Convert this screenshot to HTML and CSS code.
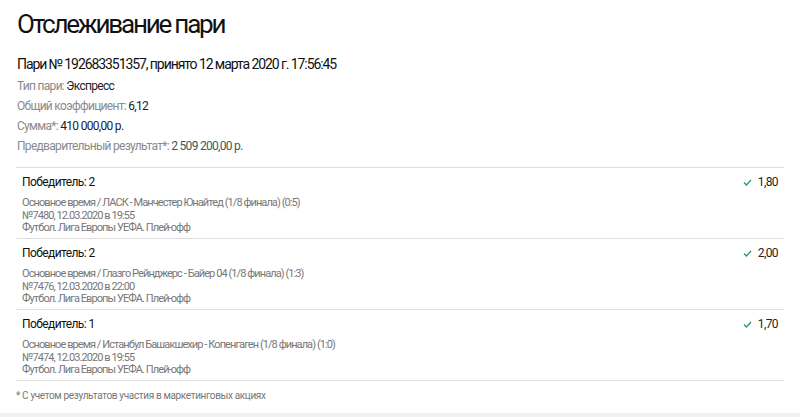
FILE: index.html
```html
<!DOCTYPE html>
<html lang="ru">
<head>
  <meta charset="UTF-8" />
  <meta name="viewport" content="width=device-width, initial-scale=1.0" />
  <title>Отслеживание пари</title>
  <link rel="stylesheet" href="styles.css">
</head>
<body>
  <div class="page">
    <h1 class="title">Отслеживание пари</h1>
    <div class="bet-head">Пари № 192683351357, принято 12 марта 2020 г. 17:56:45</div>
    <div class="info">
      <div class="info-row"><span class="label">Тип пари:</span> Экспресс</div>
      <div class="info-row"><span class="label">Общий коэффициент:</span> 6,12</div>
      <div class="info-row"><span class="label">Сумма*:</span> 410 000,00 р.</div>
      <div class="info-row"><span class="label">Предварительный результат*:</span> <span class="result">2 509 200,00 р.</span></div>
    </div>

    <div class="events">
      <div class="event">
        <div class="event-main">
          <div class="event-outcome">Победитель: 2</div>
          <div class="event-desc">
            <div>Основное время / ЛАСК - Манчестер Юнайтед (1/8 финала) (0:5)</div>
            <div>№7480, 12.03.2020 в 19:55</div>
            <div>Футбол. Лига Европы УЕФА. Плей-офф</div>
          </div>
        </div>
        <div class="event-odds">
          <svg class="check" width="9" height="7" viewBox="0 0 9 7"><path d="M1 3.6 L3.4 6 L8 1" fill="none" stroke="#2a9d6a" stroke-width="1.4"/></svg>
          1,80
        </div>
      </div>
      <div class="event">
        <div class="event-main">
          <div class="event-outcome">Победитель: 2</div>
          <div class="event-desc">
            <div>Основное время / Глазго Рейнджерс - Байер 04 (1/8 финала) (1:3)</div>
            <div>№7476, 12.03.2020 в 22:00</div>
            <div>Футбол. Лига Европы УЕФА. Плей-офф</div>
          </div>
        </div>
        <div class="event-odds">
          <svg class="check" width="9" height="7" viewBox="0 0 9 7"><path d="M1 3.6 L3.4 6 L8 1" fill="none" stroke="#2a9d6a" stroke-width="1.4"/></svg>
          2,00
        </div>
      </div>
      <div class="event">
        <div class="event-main">
          <div class="event-outcome">Победитель: 1</div>
          <div class="event-desc">
            <div>Основное время / Истанбул Башакшехир - Копенгаген (1/8 финала) (1:0)</div>
            <div>№7474, 12.03.2020 в 19:55</div>
            <div>Футбол. Лига Европы УЕФА. Плей-офф</div>
          </div>
        </div>
        <div class="event-odds">
          <svg class="check" width="9" height="7" viewBox="0 0 9 7"><path d="M1 3.6 L3.4 6 L8 1" fill="none" stroke="#2a9d6a" stroke-width="1.4"/></svg>
          1,70
        </div>
      </div>
    </div>

    <div class="note">* С учетом результатов участия в маркетинговых акциях</div>
  </div>
  <div class="bottom-band"></div>
</body>
</html>
```

FILE: styles.css
```css
body {
  margin:0;
  font-family:Roboto, "Liberation Sans", sans-serif;
  color:#222;
  background:#fff;
}
.page {
  padding:0 16px;
  height:413px;
  box-sizing:border-box;
}
.title {
  margin:0;
  padding-top:8px;
  padding-left:1px;
  font-size:26px;
  font-weight:400;
  line-height:32px;
  color:#111;
  letter-spacing:-2.2px;
}
.bet-head {
  margin-top:16px;
  padding-left:1px;
  font-size:14px;
  line-height:16px;
  color:#111;
  letter-spacing:-1.08px;
}
.info {
  margin-top:4px;
  padding-left:1px;
}
.info-row {
  font-size:12px;
  line-height:20px;
  letter-spacing:-0.7px;
}
.label {
  color:#8a8a8a;
}
.result {
  color:#2f5e5e;
}
.events {
  margin-top:11px;
  border-top:1px solid #ddd;
}
.event {
  display:flex;
  justify-content:space-between;
  border-bottom:1px solid #ddd;
  padding:7px 6px 6px 6px;
  height:71px;
  box-sizing:border-box;
}
.event-outcome {
  font-size:12px;
  line-height:14px;
  color:#111;
  letter-spacing:-0.6px;
}
.event-desc {
  margin-top:8px;
  font-size:11px;
  line-height:12.5px;
  color:#777;
  letter-spacing:-0.92px;
}
.event-odds {
  font-size:12px;
  line-height:14px;
  color:#222;
  display:flex;
  align-items:center;
  gap:6px;
  height:14px;
  letter-spacing:-0.6px;
}
.note {
  margin-top:9px;
  font-size:10px;
  line-height:12px;
  color:#777;
  letter-spacing:-0.35px;
}
.bottom-band {
  height:4px;
  background:#f2f2f2;
}
```
